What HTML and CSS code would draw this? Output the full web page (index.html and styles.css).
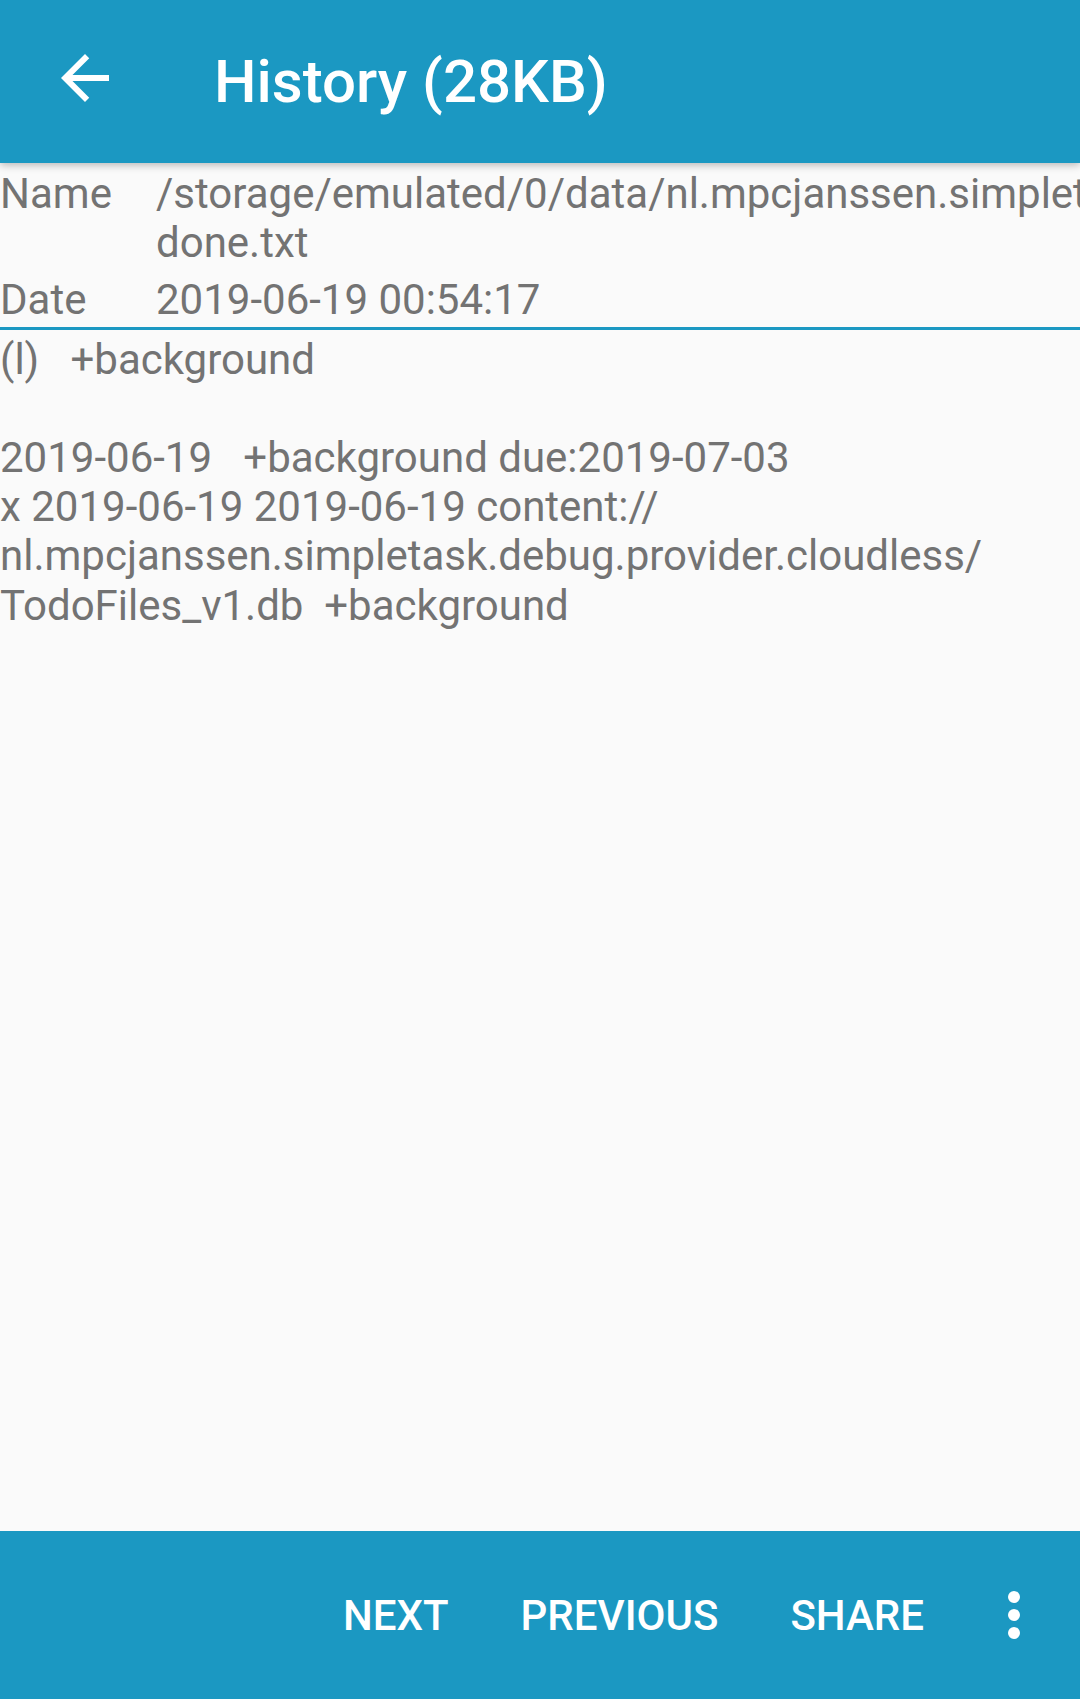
FILE: index.html
```html
<!DOCTYPE html>
<html lang="en">
<head>
<meta charset="utf-8">
<title>History (28KB)</title>
<link rel="stylesheet" href="styles.css">
</head>
<body>
<div class="screen">
  <header class="toolbar">
    <svg class="back" viewBox="0 0 24 24" width="72" height="72" aria-hidden="true">
      <path d="M20 11H7.83l5.59-5.59L12 4l-8 8 8 8 1.41-1.41L7.83 13H20v-2z" fill="#ffffff"/>
    </svg>
    <h1 class="title">History (28KB)</h1>
  </header>
  <main class="main">
    <div class="meta">
      <div class="label">Name</div>
      <div class="value">/storage/emulated/0/data/nl.mpcjanssen.simpletask/<br>done.txt</div>
      <div class="label row2">Date</div>
      <div class="value row2">2019-06-19 00:54:17</div>
    </div>
    <div class="sep"></div>
    <div class="content">(l)   +background

2019-06-19   +background due:2019-07-03
x 2019-06-19 2019-06-19 content://
nl.mpcjanssen.simpletask.debug.provider.cloudless/
TodoFiles_v1.db  +background</div>
  </main>
  <footer class="bottombar">
    <span class="btn">NEXT</span>
    <span class="btn">PREVIOUS</span>
    <span class="btn">SHARE</span>
    <span class="more" aria-label="More options"><i></i><i></i><i></i></span>
  </footer>
</div>
</body>
</html>
```
FILE: styles.css
```css
html, body {
  margin: 0;
  padding: 0;
  background: #fafafa;
}
.screen {
  width: 1080px;
  height: 1699px;
  overflow: hidden;
  display: flex;
  flex-direction: column;
  font-family: Roboto, "Liberation Sans", sans-serif;
}
.toolbar {
  flex: 0 0 163px;
  height: 163px;
  background: #1b98c2;
  display: flex;
  align-items: center;
  box-shadow: 0 2px 8px rgba(0, 0, 0, 0.28);
  position: relative;
  z-index: 2;
}
.back {
  display: block;
  margin-left: 49px;
  align-self: flex-start;
  margin-top: 42px;
  flex: 0 0 72px;
}
.title {
  margin: 0 0 0 93px;
  font-size: 60px;
  font-weight: 500;
  color: #ffffff;
  line-height: 70px;
  white-space: nowrap;
}
.main {
  flex: 1 1 auto;
  background: #fafafa;
  overflow: hidden;
  color: #737373;
  font-size: 42px;
}
.meta {
  display: grid;
  grid-template-columns: 156px auto;
  padding-top: 6px;
  white-space: nowrap;
  overflow: hidden;
}
.label, .value {
  line-height: 49.2px;
}
.row2 {
  margin-top: 8px;
}
.sep {
  height: 3px;
  background: #1b98c2;
  margin-top: 2px;
}
.content {
  margin-top: 5px;
  white-space: pre;
  line-height: 49.2px;
}
.bottombar {
  flex: 0 0 168px;
  height: 168px;
  background: #1b98c2;
  display: flex;
  justify-content: flex-end;
  align-items: center;
  padding-right: 60px;
  color: #ffffff;
  font-size: 42px;
  font-weight: 500;
}
.btn {
  margin-left: 72px;
  line-height: 49px;
  white-space: nowrap;
}
.more {
  display: flex;
  flex-direction: column;
  gap: 6px;
  margin-left: 84px;
}
.more i {
  display: block;
  width: 12px;
  height: 12px;
  border-radius: 50%;
  background: #ffffff;
}
```
